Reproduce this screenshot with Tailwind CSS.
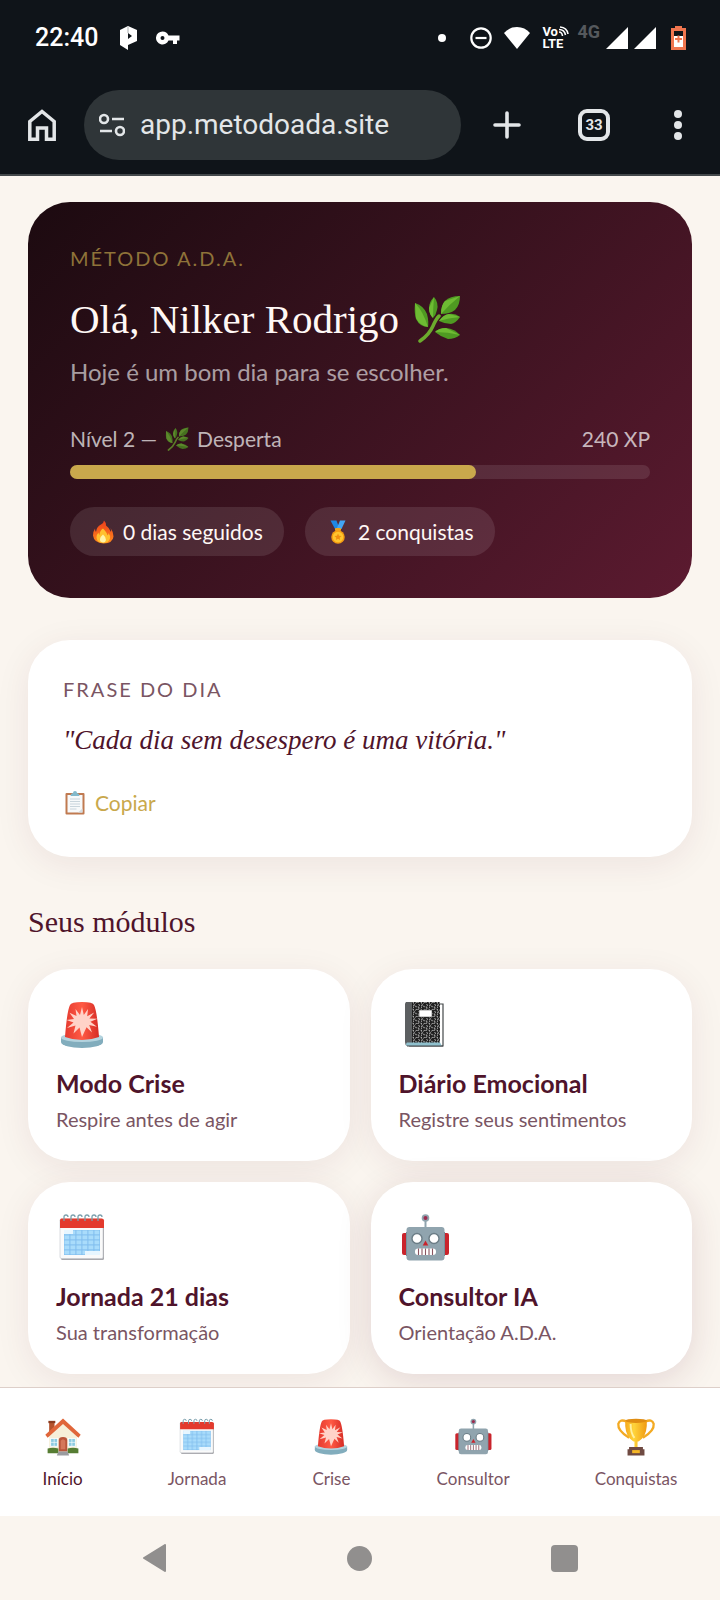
<!DOCTYPE html>
<html lang="pt-BR">
<head>
    <meta charset="UTF-8">
    <meta name="viewport" content="width=device-width, initial-scale=1.0">
    <title>Método A.D.A.</title>
    <script src="https://cdn.jsdelivr.net/npm/@tailwindcss/browser@4"></script>
</head>
<body class="flex min-h-screen flex-col bg-[#faf5ef] font-[Lato,'Noto_Sans',sans-serif] text-[#4f142b]">

    <!-- Icon sprites -->
    <svg class="absolute size-0" aria-hidden="true">
        <defs>
            <pattern id="speckle" width="8" height="7" patternUnits="userSpaceOnUse">
                <rect width="8" height="7" fill="#1f1f1f"/>
                <path d="M.5 1.5l1.8-.8M4 .8l.6 1.7M6.4 2.2l1.3-.9M1.8 3.2l.7 1.5M4.2 4.4l1.7-.6M6.8 4.8l.4 1.4M.8 6l1.5.3M4 6.4l1-.5" stroke="#e8e8e8" stroke-width=".9" fill="none"/>
            </pattern>
            <pattern id="days" x="6" y="16" width="6" height="5" patternUnits="userSpaceOnUse">
                <rect width="6" height="5" fill="#7fbdee"/>
                <rect x=".4" y=".4" width="5" height="4" fill="#a9dcfb"/>
            </pattern>
            <linearGradient id="dome" x1="0" x2="1"><stop stop-color="#e53b30"/><stop offset=".5" stop-color="#ff5a44"/><stop offset="1" stop-color="#d62c25"/></linearGradient>
            <linearGradient id="flame" x1="0" y1="0" x2="0" y2="1"><stop stop-color="#ee3d1c"/><stop offset="1" stop-color="#ff8a1c"/></linearGradient>
            <linearGradient id="cup" x1="0" x2="1"><stop stop-color="#f5a81b"/><stop offset=".4" stop-color="#ffd43a"/><stop offset="1" stop-color="#f09a12"/></linearGradient>
        </defs>
        <symbol id="siren" viewBox="-2 -2 52 52">
            <ellipse cx="24" cy="41" rx="21" ry="6" fill="#82adbd"/>
            <path d="M3 36h42v5H3z" fill="#82adbd"/>
            <ellipse cx="24" cy="36.500" rx="21" ry="4.500" fill="#b4d3de"/>
            <path d="M12 4Q13 1 24 1t12 3q3 6 5 32-8 3-17 3T7 36Q9 10 12 4z" fill="url(#dome)"/>
            <path d="M24 6l1.800 8 4.200-6-.8 7.200 7-3.800-4.800 6 8 .4-7 3 6.500 5-7.700-1.800 2.800 7.500-5.500-5.200L24 36l-2.500-9.500-6 6 2-8-8.500 2.500 6.500-5.500-7-2.500 7.500-1-4.500-6.200 7 3.200-1-7 4.500 6z" fill="#ffd3c8"/>
        </symbol>
        <symbol id="notebook" viewBox="-2 -2 52 52">
            <path d="M36 3h6v42H9z" fill="#fff" stroke="#44484a" stroke-width="1.200"/>
            <rect x="5" y="1" width="34" height="41" rx="1" fill="url(#speckle)"/>
            <path d="M6 1h5v44H6q-2-1-2-4V3q0-2 2-2z" fill="#5c5f61"/>
            <rect x="18" y="9" width="13" height="7" fill="#fff" stroke="#333" stroke-width=".5"/>
            <path d="M6 41.500h33L41 45H6q-2-1.500 0-3.500z" fill="#8fc0cd"/>
            <path d="M6 45h36" stroke="#44484a"/>
        </symbol>
        <symbol id="calendar" viewBox="-2 -2 52 52">
            <rect x="3" y="6" width="43" height="40" rx="1.500" fill="#a9a9ad"/>
            <rect x="2" y="5" width="43" height="39.500" rx="1.500" fill="#fafafa" stroke="#c5c8cc" stroke-width=".6"/>
            <path d="M3.500 4.500h40q2.500 0 2.500 2V14H2V6.500q0-2 1.500-2z" fill="#e33a2d"/>
            <rect x="6" y="16" width="36" height="25" fill="url(#days)"/>
            <path d="M6 16h9v4H6zM27 37h15v4H27z" fill="#e7f6ff"/>
            <path d="M6 7V3q0-2 2-2t2 2M13 7V3q0-2 2-2t2 2M20 7V3q0-2 2-2t2 2M27 7V3q0-2 2-2t2 2M34 7V3q0-2 2-2t2 2M40 7V3q0-2 2-2t2 2" fill="none" stroke="#7ba0ad" stroke-width="1.300"/>
        </symbol>
        <symbol id="robot" viewBox="-2 -2 52 52">
            <path d="M24.500 5v9" stroke="#90a4ae" stroke-width="2"/>
            <circle cx="24.500" cy="4" r="3.800" fill="#90a4ae"/><circle cx="24.500" cy="4" r="2" fill="#9b2b4e"/>
            <rect x="1" y="19" width="8" height="22" rx="2" fill="#c9242c"/><rect x="40" y="19" width="8" height="22" rx="2" fill="#c9242c"/>
            <rect x="5.500" y="13" width="38" height="33.500" rx="3" fill="#90a4ae"/>
            <path d="M5.500 18v24M43.500 18v24" stroke="#78909c"/>
            <circle cx="16" cy="24.500" r="5" fill="#fff" stroke="#6b7d86" stroke-width="1.400"/><circle cx="33" cy="24.500" r="5" fill="#fff" stroke="#6b7d86" stroke-width="1.400"/>
            <path d="M24.500 26.500l2.800 5h-5.600z" fill="#c9242c"/>
            <rect x="14" y="34.500" width="21" height="6.500" rx="3" fill="#fff"/>
            <path d="M17.500 34.500V41m3.500-6.500V41m3.500-6.500V41m3.500-6.500V41m3.500-6.500V41" stroke="#8a5560" stroke-width="1.100"/>
        </symbol>
        <symbol id="herb" viewBox="0 0 48 48">
            <path d="M7 46q9-6 13-15 3-7 6-10" fill="none" stroke="#6cab2d" stroke-width="3.500" stroke-linecap="round"/>
            <path d="M2 8q9 3 12 11 2 8 1 13-8 0-12-8Q1 18 2 8z" fill="#4f9a22"/><path d="M2 8q8 8 13 24-8-1-12-9z" fill="#6ebb33"/>
            <path d="M21 2q5 6 3 13-1 5-4 8-4-4-4-10 0-6 5-11z" fill="#4f9a22"/><path d="M21 2q-1 12-1 21-4-4-4-10z" fill="#6ebb33"/>
            <path d="M47 1q0 9-5 14-5 4-14 4 0-9 4-13Q37 1 47 1z" fill="#4f9a22"/><path d="M47 1q-10 8-19 18 0-9 4-13z" fill="#6ebb33"/>
            <path d="M47 22q-4 6-9 7-6 0-12-3 4-6 10-7t11 3z" fill="#4f9a22"/><path d="M47 22q-12 1-21 4 4-6 10-7z" fill="#6ebb33"/>
            <path d="M47 40q-5 4-12 4-7-2-13-7 4-4 11-4 9 1 14 7z" fill="#4f9a22"/><path d="M47 40q-12-3-25-3 4-4 11-4z" fill="#6ebb33"/>
        </symbol>
        <symbol id="fire" viewBox="0 0 48 48">
            <path d="M26 1q5 5 4 10 7 5 10 13 1-4-1-8 6 8 6 17-1 13-20 14Q6 46 4 31q0-8 4-14 0 4 2 7Q11 13 20 9q6-4 6-8z" fill="url(#flame)"/>
            <path d="M24 17q8 8 9 14 2-2 2-5 4 5 3 11-3 9-14 9-12-1-13-11 0-6 4-10 0 3 2 5 0-8 7-13z" fill="#ffc02e"/>
            <path d="M24 29q6 5 6 11-1 5-6 5-7-1-6-7 1-5 6-9z" fill="#fff3a8"/>
        </symbol>
        <symbol id="medal" viewBox="0 0 48 48">
            <path d="M9 1h12l6 17h-9z" fill="#1e88e5"/><path d="M39 1H28l-7 17h10z" fill="#42a5f5"/>
            <rect x="18" y="16" width="12" height="6" rx="2" fill="#f0a31c"/>
            <circle cx="24" cy="34" r="13.500" fill="#f59c12"/><circle cx="24" cy="34" r="10.500" fill="#ffc52e"/>
            <path d="M24 27l2 4.500 5 .5-3.700 3.300 1 4.700-4.300-2.500-4.300 2.500 1-4.700L17 32l5-.5z" fill="#f08f10"/>
        </symbol>
        <symbol id="clipboard" viewBox="0 0 48 48">
            <rect x="5" y="4" width="38" height="43" rx="2" fill="#c07a50"/>
            <path d="M9 8h30v35H9z" fill="#f7f9fa"/><path d="M30 43l9-8v8z" fill="#d5dde2"/>
            <path d="M15 10q0-5 5-6 0-4 4-4t4 4q5 1 5 6z" fill="#82b9cb"/>
            <path d="M14 16h20M14 21h20M14 26h20M14 31h20M14 36h13" stroke="#b9c8d2" stroke-width="1.500"/>
        </symbol>
        <symbol id="house" viewBox="-2 -2 52 52">
            <path d="M6 4h7v12l-7 6z" fill="#b5532c"/><path d="M5 3h9v3H5z" fill="#8c3c1f"/>
            <path d="M6 22L24 5l18 17v22H6z" fill="#f6efd9"/>
            <path d="M24 0L1 21l3 4L24 7l20 18 3-4z" fill="#e0663a"/>
            <rect x="8" y="26" width="9" height="10" fill="#8ccbe0" stroke="#fff"/><rect x="31" y="26" width="9" height="10" fill="#8ccbe0" stroke="#fff"/>
            <path d="M12.500 26v10M8 31h9M35.500 26v10M31 31h9" stroke="#fff" stroke-width=".8"/>
            <path d="M18.500 43V28q0-4 5.500-4t5.500 4v15z" fill="#b9553b"/><path d="M21 40V29q3-4 6 0v11z" fill="#d4775a"/>
            <path d="M4 39q7-2 14 0v6H4zM30 39q7-2 14 0v6H30z" fill="#567d33"/>
            <path d="M18 43h12l2 5H16z" fill="#9a9b9f"/>
        </symbol>
        <symbol id="trophy" viewBox="-2 -2 52 52">
            <path d="M12 4Q3 0 1 7q-1 9 14 18M36 4q9-4 11 3 1 9-14 18" fill="none" stroke="#f3aa23" stroke-width="3"/>
            <path d="M10 2h28q1 17-6 24-4 4-6 4v8h-4v-8q-2 0-6-4Q9 19 10 2z" fill="url(#cup)"/>
            <ellipse cx="24" cy="3" rx="14" ry="2.800" fill="#e08d12"/>
            <path d="M17 7q0 12 5 18" fill="none" stroke="#fff0a0" stroke-width="2.500"/>
            <path d="M15 37h18v4H15zM13 40h22v8H13z" fill="#6f4a42"/><path d="M19 41h10v4H19z" fill="#f5b727"/>
        </symbol>
    </svg>

    <!-- Phone status bar and browser toolbar -->
    <header class="border-b-2 border-[#43484b] bg-[#0f1419] font-[Roboto,sans-serif] text-[#e3e6e8]">
        <div class="flex h-[76px] items-center pr-[34px] pl-[35px] text-white">
            <span class="text-[25px] font-medium">22:40</span>
            <svg class="ml-[22px] h-6 w-[18px]" viewBox="0 0 18 24" fill="currentColor">
                <path d="M0 4L8 0l9 4v11l-9 4v5l-8-5zM8 7v6l4-3z" fill-rule="evenodd"/>
                <path d="M8 1v6" stroke="#8a8f92" stroke-width=".7"/>
            </svg>
            <svg class="ml-[18px] h-4 w-6" viewBox="0 0 24 16" fill="currentColor">
                <path d="M6.500 1.500a6.500 6.500 0 1 0 6 9H17V14h4v-3.500h2.500v-5h-11a6.500 6.500 0 0 0-6-4zm0 4.500a2 2 0 1 1 0 4 2 2 0 0 1 0-4z" fill-rule="evenodd"/>
            </svg>
            <span class="mr-6 ml-auto size-2 rounded-full bg-white"></span>
            <svg class="mr-3 size-[22px]" viewBox="0 0 22 22" fill="none" stroke="currentColor" stroke-width="2.200"><circle cx="11" cy="11" r="9.700"/><path d="M5.500 11h11"/></svg>
            <svg class="mr-3 h-[22px] w-[26px]" viewBox="0 0 26 22" fill="currentColor"><path d="M13 22L0 6Q5 0 13 0t13 6z"/></svg>
            <div class="relative mr-2 w-[27px] text-[13px] leading-[12px] font-bold">
                <div>Vo</div>
                <div>LTE</div>
                <svg class="absolute top-0 right-0 size-[11px]" viewBox="0 0 11 11" fill="none" stroke="currentColor" stroke-width="1.600"><path d="M1 6q3 0 3.500 4M1 3.500q5.500 0 6.500 5.500M2 1q7 .5 8 7"/></svg>
            </div>
            <span class="mr-1.5 mb-3 text-[18px] leading-5 font-bold text-[#55595d]">4G</span>
            <svg class="mr-1.5 size-[22px]" viewBox="0 0 22 22" fill="currentColor"><path d="M22 0v22H0z"/></svg>
            <svg class="mr-[15px] size-[22px]" viewBox="0 0 22 22" fill="currentColor"><path d="M22 0v22H0z"/></svg>
            <svg class="h-6 w-[15px]" viewBox="0 0 15 24"><path d="M4 0h7v2h4v22H0V2h4z" fill="#f0764f"/><path d="M3 5h9v5H3z" fill="#0f1419"/><path d="M3 10h9v11H3z" fill="#fff"/><path d="M7.500 9.500v7M4 13h7" stroke="#f0764f" stroke-width="2"/></svg>
        </div>
        <div class="flex h-[98px] items-center pr-[38px] pl-7">
            <button aria-label="Página inicial">
                <svg class="h-8 w-7" viewBox="0 0 28 32" fill="none" stroke="currentColor" stroke-width="3.500"><path d="M1.800 30.200V12.500L14 2.500l12.200 10v17.700h-7.700V19h-9v11.200z"/></svg>
            </button>
            <div class="ml-7 flex h-[70px] min-w-0 flex-1 items-center rounded-full bg-[#2f3538] pl-[15px]">
                <svg class="mr-[15px] h-6 w-[26px] shrink-0" viewBox="0 0 26 24" fill="none" stroke="currentColor" stroke-width="2.600"><circle cx="5" cy="6" r="4"/><path d="M13 6h12M1 18h12"/><circle cx="21" cy="18" r="4"/></svg>
                <input type="text" value="app.metodoada.site" aria-label="Endereço" class="w-full min-w-0 bg-transparent text-[28px] outline-none">
            </div>
            <button class="ml-8" aria-label="Nova guia">
                <svg class="size-7" viewBox="0 0 28 28" stroke="currentColor" stroke-width="3.600" stroke-linecap="round"><path d="M14 2v24M2 14h24"/></svg>
            </button>
            <button class="ml-[57px] size-8 rounded-[9px] border-4 border-current text-[15px] leading-6 font-bold">33</button>
            <button class="ml-16 flex flex-col gap-[3px]" aria-label="Mais opções">
                <span class="size-2 rounded-full bg-current"></span>
                <span class="size-2 rounded-full bg-current"></span>
                <span class="size-2 rounded-full bg-current"></span>
            </button>
        </div>
    </header>

    <!-- Main Content -->
    <main class="flex-1 px-7 pt-[26px] pb-3">
        <!-- Greeting -->
        <section class="rounded-[42px] bg-linear-135 from-[#1c0a10] to-[#5c1a30] p-[42px]">
            <p class="text-xl leading-7 tracking-widest text-[#8f7339]">MÉTODO A.D.A.</p>
            <h1 class="mt-5 flex items-center gap-3.5 font-['Liberation_Serif',serif] text-[41px] leading-[54px] text-[#fff8f5]">Olá, Nilker Rodrigo
                <svg class="size-12"><use href="#herb"/></svg>
            </h1>
            <p class="mt-2 text-2xl leading-9 text-white/60">Hoje é um bom dia para se escolher.</p>
            <div class="mt-[35px] flex justify-between text-[21px] leading-7 text-white/70">
                <span class="flex items-center gap-2">Nível 2 — <svg class="size-6 opacity-70"><use href="#herb"/></svg> Desperta</span>
                <span>240 XP</span>
            </div>
            <div class="mt-3 h-3.5 rounded-full bg-white/10">
                <div class="h-full rounded-full bg-[#c9a84c]" style="width: 70%"></div>
            </div>
            <div class="mt-7 flex gap-[21px] text-[21px] text-[#fff8f5]">
                <span class="flex h-[49px] items-center gap-2 rounded-full bg-white/10 px-[21px]"><svg class="size-6"><use href="#fire"/></svg>0 dias seguidos</span>
                <span class="flex h-[49px] items-center gap-2 rounded-full bg-white/10 px-[21px]"><svg class="size-6"><use href="#medal"/></svg>2 conquistas</span>
            </div>
        </section>

        <!-- Quote of the day -->
        <section class="mt-[42px] rounded-[42px] bg-white px-[35px] pt-[35px] pb-10 shadow-[0_7px_35px_rgba(92,26,48,0.08)]">
            <p class="text-xl leading-7 tracking-widest text-[#7a5563]">FRASE DO DIA</p>
            <p class="mt-4 font-['Liberation_Serif',serif] text-[27px] leading-[42px] italic">"Cada dia sem desespero é uma vitória."</p>
            <button class="mt-7 flex items-center gap-2 text-[21px] leading-7 text-[#c9a84c]"><svg class="size-6"><use href="#clipboard"/></svg>Copiar</button>
        </section>

        <!-- Modules -->
        <h2 class="mt-11 font-['Liberation_Serif',serif] text-[30px] leading-[42px]">Seus módulos</h2>
        <div class="mt-[26px] grid grid-cols-2 gap-[21px]">
            <a href="#" class="rounded-[42px] bg-white px-7 pt-[30px] pb-7 shadow-[0_7px_35px_rgba(92,26,48,0.08)]">
                <svg class="size-[52px]"><use href="#siren"/></svg>
                <h3 class="mt-3.5 text-[25px] leading-9 font-bold">Modo Crise</h3>
                <p class="mt-1 text-xl leading-7 text-[#7a5563]">Respire antes de agir</p>
            </a>
            <a href="#" class="rounded-[42px] bg-white px-7 pt-[30px] pb-7 shadow-[0_7px_35px_rgba(92,26,48,0.08)]">
                <svg class="size-[52px]"><use href="#notebook"/></svg>
                <h3 class="mt-3.5 text-[25px] leading-9 font-bold">Diário Emocional</h3>
                <p class="mt-1 text-xl leading-7 text-[#7a5563]">Registre seus sentimentos</p>
            </a>
            <a href="#" class="rounded-[42px] bg-white px-7 pt-[30px] pb-7 shadow-[0_7px_35px_rgba(92,26,48,0.08)]">
                <svg class="size-[52px]"><use href="#calendar"/></svg>
                <h3 class="mt-3.5 text-[25px] leading-9 font-bold">Jornada 21 dias</h3>
                <p class="mt-1 text-xl leading-7 text-[#7a5563]">Sua transformação</p>
            </a>
            <a href="#" class="rounded-[42px] bg-white px-7 pt-[30px] pb-7 shadow-[0_7px_35px_rgba(92,26,48,0.14)]">
                <svg class="size-[52px]"><use href="#robot"/></svg>
                <h3 class="mt-3.5 text-[25px] leading-9 font-bold">Consultor IA</h3>
                <p class="mt-1 text-xl leading-7 text-[#7a5563]">Orientação A.D.A.</p>
            </a>
        </div>
    </main>

    <!-- Bottom navigation -->
    <nav class="relative flex justify-around border-t border-[#ddcfc9] bg-white pt-[29px] pb-[25px] text-[17px] leading-6 text-[#7a5563]">
        <a href="#" class="flex flex-col items-center gap-2.5 text-[#4f142b]"><svg class="size-10"><use href="#house"/></svg>Início</a>
        <a href="#" class="flex flex-col items-center gap-2.5"><svg class="size-10"><use href="#calendar"/></svg>Jornada</a>
        <a href="#" class="flex flex-col items-center gap-2.5"><svg class="size-10"><use href="#siren"/></svg>Crise</a>
        <a href="#" class="flex flex-col items-center gap-2.5"><svg class="size-10"><use href="#robot"/></svg>Consultor</a>
        <a href="#" class="flex flex-col items-center gap-2.5"><svg class="size-10"><use href="#trophy"/></svg>Conquistas</a>
    </nav>

    <!-- System buttons -->
    <footer class="relative flex h-[84px] items-center justify-between bg-[#faf5ef] px-[142px] text-[#918f8e]">
        <button aria-label="Voltar"><svg class="h-7 w-[26px]" viewBox="0 0 26 28" fill="currentColor" stroke="currentColor" stroke-width="2" stroke-linejoin="round"><path d="M2 14L23 1v26z"/></svg></button>
        <button class="size-[25px] rounded-full bg-current" aria-label="Início do sistema"></button>
        <button class="size-[27px] rounded-sm bg-current" aria-label="Recentes"></button>
    </footer>
</body>
</html>
